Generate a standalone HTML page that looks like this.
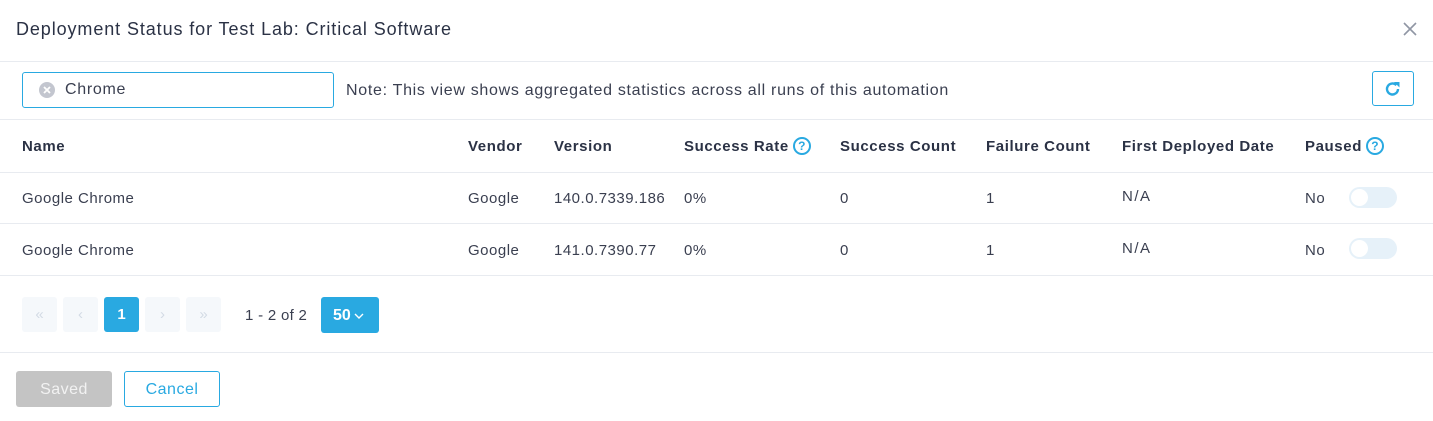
<!DOCTYPE html>
<html><head><meta charset="utf-8"><style>
*{box-sizing:border-box;margin:0;padding:0}
body{width:1433px;height:421px;background:#fff;font-family:"Liberation Sans",sans-serif;color:#2f3447;position:relative;overflow:hidden}
.a{position:absolute;white-space:nowrap}
.hl{position:absolute;left:0;width:1433px;height:1px;background:#e8ebf0}
.th{position:absolute;top:136px;height:20px;font-size:15px;font-weight:bold;color:#2b3245;letter-spacing:0.6px;display:flex;align-items:center;white-space:nowrap}
.td{position:absolute;font-size:15px;color:#3a3f50;letter-spacing:0.5px;white-space:nowrap}
.q{display:inline-block;width:18px;height:18px;border:2px solid #29a9e1;border-radius:50%;color:#29a9e1;font-size:12px;font-weight:bold;text-align:center;line-height:14px;margin-left:4px;letter-spacing:0}
.tg{position:absolute;left:1349px;width:48px;height:21px;border-radius:11px;background:#e6f1f9}
.tg:after{content:"";position:absolute;left:2px;top:2px;width:17px;height:17px;border-radius:50%;background:#fff}
.pb{position:absolute;top:297px;width:35px;height:35px;border-radius:3px;background:#f5f8fb;color:#d3dbe5;text-align:center;line-height:35px;font-size:15px}
</style></head><body>
<div class="a" style="left:16px;top:19px;font-size:18px;color:#2b3245;letter-spacing:0.9px">Deployment Status for Test Lab: Critical Software</div>
<svg class="a" style="left:1402px;top:21px" width="16" height="16"><path d="M2 2L14 14M14 2L2 14" stroke="#9096a4" stroke-width="1.6"/></svg>
<div class="hl" style="top:61px"></div>
<div class="a" style="left:22px;top:72px;width:312px;height:36px;border:1px solid #29a9e1;border-radius:3px"></div>
<svg class="a" style="left:39px;top:82px" width="16" height="16"><circle cx="8" cy="8" r="8" fill="#c3c6cf"/><path d="M5 5L11 11M11 5L5 11" stroke="#fff" stroke-width="1.8"/></svg>
<div class="a" style="left:65px;top:81px;font-size:16px;color:#3a3f50;letter-spacing:0.7px">Chrome</div>
<div class="a" style="left:346px;top:82px;font-size:16px;color:#3a3f50;letter-spacing:0.7px">Note: This view shows aggregated statistics across all runs of this automation</div>
<div class="a" style="left:1372px;top:71px;width:42px;height:35px;border:1px solid #29a9e1;border-radius:3px"></div>
<svg class="a" style="left:1384px;top:80px" width="18" height="18"><path d="M14 9A5.5 5.5 0 1 1 12.4 5.1" fill="none" stroke="#29a9e1" stroke-width="2.4"/><path d="M10 2L15.5 2L15.5 7.5Z" fill="#29a9e1"/></svg>
<div class="hl" style="top:119px"></div>
<div class="th" style="left:22px">Name</div>
<div class="th" style="left:468px">Vendor</div>
<div class="th" style="left:554px">Version</div>
<div class="th" style="left:684px">Success Rate<span class="q">?</span></div>
<div class="th" style="left:840px">Success Count</div>
<div class="th" style="left:986px">Failure Count</div>
<div class="th" style="left:1122px">First Deployed Date</div>
<div class="th" style="left:1305px">Paused<span class="q">?</span></div>
<div class="hl" style="top:172px"></div>
<div class="td" style="left:22px;top:190px">Google Chrome</div>
<div class="td" style="left:468px;top:190px">Google</div>
<div class="td" style="left:554px;top:190px">140.0.7339.186</div>
<div class="td" style="left:684px;top:190px">0%</div>
<div class="td" style="left:840px;top:190px">0</div>
<div class="td" style="left:986px;top:190px">1</div>
<div class="td" style="left:1122px;top:188px;letter-spacing:1.5px">N/A</div>
<div class="td" style="left:1305px;top:190px">No</div>
<div class="tg" style="top:187px"></div>
<div class="hl" style="top:223px"></div>
<div class="td" style="left:22px;top:242px">Google Chrome</div>
<div class="td" style="left:468px;top:242px">Google</div>
<div class="td" style="left:554px;top:242px">141.0.7390.77</div>
<div class="td" style="left:684px;top:242px">0%</div>
<div class="td" style="left:840px;top:242px">0</div>
<div class="td" style="left:986px;top:242px">1</div>
<div class="td" style="left:1122px;top:240px;letter-spacing:1.5px">N/A</div>
<div class="td" style="left:1305px;top:242px">No</div>
<div class="tg" style="top:238px"></div>
<div class="hl" style="top:275px"></div>
<div class="pb" style="left:22px">«</div>
<div class="pb" style="left:63px">‹</div>
<div class="pb" style="left:104px;background:#29a9e1;color:#fff;font-weight:bold">1</div>
<div class="pb" style="left:145px">›</div>
<div class="pb" style="left:186px">»</div>
<div class="a" style="left:245px;top:307px;font-size:15px;color:#3a3f50;letter-spacing:0.3px">1 - 2 of 2</div>
<div class="a" style="left:321px;top:297px;width:58px;height:36px;border-radius:3px;background:#29a9e1;color:#fff;font-weight:bold;font-size:16px;line-height:37px;padding-left:12px">50<svg width="10" height="8" style="margin-left:3px"><path d="M1 2L5 6L9 2" fill="none" stroke="#fff" stroke-width="1.4"/></svg></div>
<div class="hl" style="top:352px"></div>
<div class="a" style="left:16px;top:371px;width:96px;height:36px;border-radius:3px;background:#c4c4c4;color:#f2f2f2;text-align:center;line-height:37px;font-size:16px;letter-spacing:0.5px">Saved</div>
<div class="a" style="left:124px;top:371px;width:96px;height:36px;border-radius:3px;border:1px solid #29a9e1;color:#29a9e1;text-align:center;line-height:35px;font-size:16px;letter-spacing:0.5px">Cancel</div>
</body></html>
